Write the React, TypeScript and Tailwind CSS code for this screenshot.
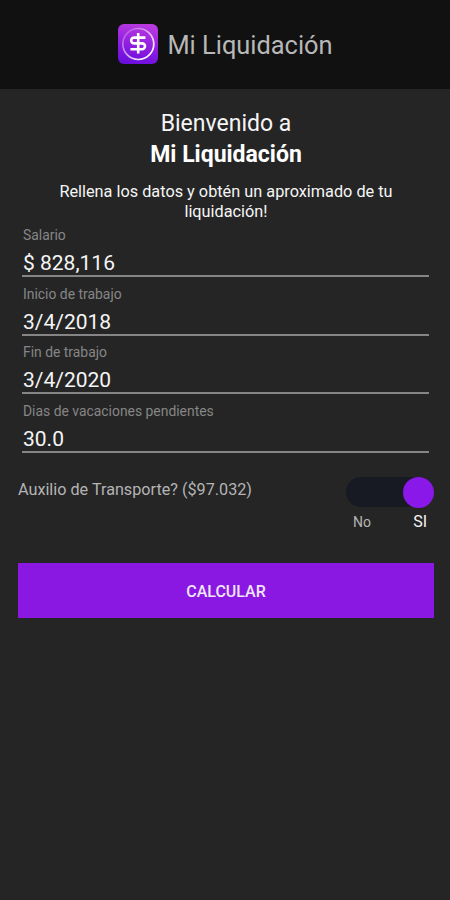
import { useState } from "react"

const fields = [
  { id: "salario", label: "Salario", value: "$ 828,116" },
  { id: "inicio", label: "Inicio de trabajo", value: "3/4/2018" },
  { id: "fin", label: "Fin de trabajo", value: "3/4/2020" },
  { id: "vacaciones", label: "Dias de vacaciones pendientes", value: "30.0" },
]

function Logo() {
  return (
    <svg className="h-10 w-10" viewBox="0 0 40 40" fill="none">
      <defs>
        <linearGradient id="logoBg" x1="0.6" y1="0" x2="0.4" y2="1">
          <stop offset="0" stopColor="#b93bdf" />
          <stop offset="0.5" stopColor="#9420e0" />
          <stop offset="1" stopColor="#6a0fdc" />
        </linearGradient>
        <linearGradient id="logoRing" x1="0.1" y1="0.1" x2="0.8" y2="0.8">
          <stop offset="0" stopColor="#fff" stopOpacity="0.2" />
          <stop offset="1" stopColor="#fff" stopOpacity="0.95" />
        </linearGradient>
      </defs>
      <rect width="40" height="40" rx="6" fill="url(#logoBg)" />
      <circle cx="20.3" cy="20" r="15.5" stroke="url(#logoRing)" strokeWidth="1.7" />
      <path
        d="M27.4 13.6H16.1a2.9 2.9 0 0 0 0 5.8h8a2.9 2.9 0 0 1 0 5.8H12.4M20.2 9v20.4"
        stroke="#fff"
        strokeWidth="2.6"
      />
    </svg>
  )
}

export default function App() {
  const [transporte, setTransporte] = useState(true)

  return (
    <main className="min-h-screen bg-[#252525] font-['Roboto',sans-serif] text-[#f5f5f5]">
      {/* Header */}
      <header className="flex h-[89px] items-center justify-center gap-[9px] bg-[#111111] pb-[2px] pl-[1px]">
        <Logo />
        <span className="pt-[2px] text-[25.4px] leading-[30px] text-[#b8b8b8]">Mi Liquidación</span>
      </header>

      <div className="pt-[19px] pr-4 pl-[18px]">
        <h1 className="text-center text-[23px] leading-[31px]">
          Bienvenido a<br />
          <b className="font-bold text-white">Mi Liquidación</b>
        </h1>
        <p className="mx-auto mt-[12px] w-[360px] text-center text-[16.3px] leading-[19.5px]">
          Rellena los datos y obtén un aproximado de tu liquidación!
        </p>

        {/* Form */}
        <div className="mt-[5px] pr-[5px] pl-[4px]">
          {fields.map((field) => (
            <div key={field.id} className="h-[58.5px]">
              <label htmlFor={field.id} className="block pl-[1px] text-[13.9px] leading-[18px] text-[#868686]">
                {field.label}
              </label>
              <input
                id={field.id}
                defaultValue={field.value}
                className="mt-[6px] block h-[27px] w-full border-b-2 border-[#858585] bg-transparent pt-[1px] pl-[1px] text-[21px] leading-[25px] outline-none"
              />
            </div>
          ))}
        </div>

        <div className="mt-[17px] flex items-start justify-between">
          <span className="mt-[3px] text-[16.2px] leading-[20px] text-[#b4b4b4]">
            Auxilio de Transporte? ($97.032)
          </span>
          <div className="w-[88px]">
            <button
              role="switch"
              aria-checked={transporte}
              onClick={() => setTransporte(!transporte)}
              className={`flex h-[30px] w-[88px] items-center rounded-full bg-[#171923] ${transporte ? "justify-end" : "justify-start"}`}
            >
              <span className="h-[31px] w-[31px] shrink-0 rounded-full bg-[#8a18e8]" />
            </button>
            <div className="mt-[5px] flex items-center justify-between pr-[7px] pl-[7px] leading-[20px]">
              <span className="text-[14px] text-[#b4b4b4]">No</span>
              <span className="text-[16px]">SI</span>
            </div>
          </div>
        </div>

        <button className="mt-[31px] block h-[55px] w-full bg-[#8a18e2] pt-[3px] text-[16px] font-medium text-[#f0e6fa]">
          CALCULAR
        </button>
      </div>
    </main>
  )
}
